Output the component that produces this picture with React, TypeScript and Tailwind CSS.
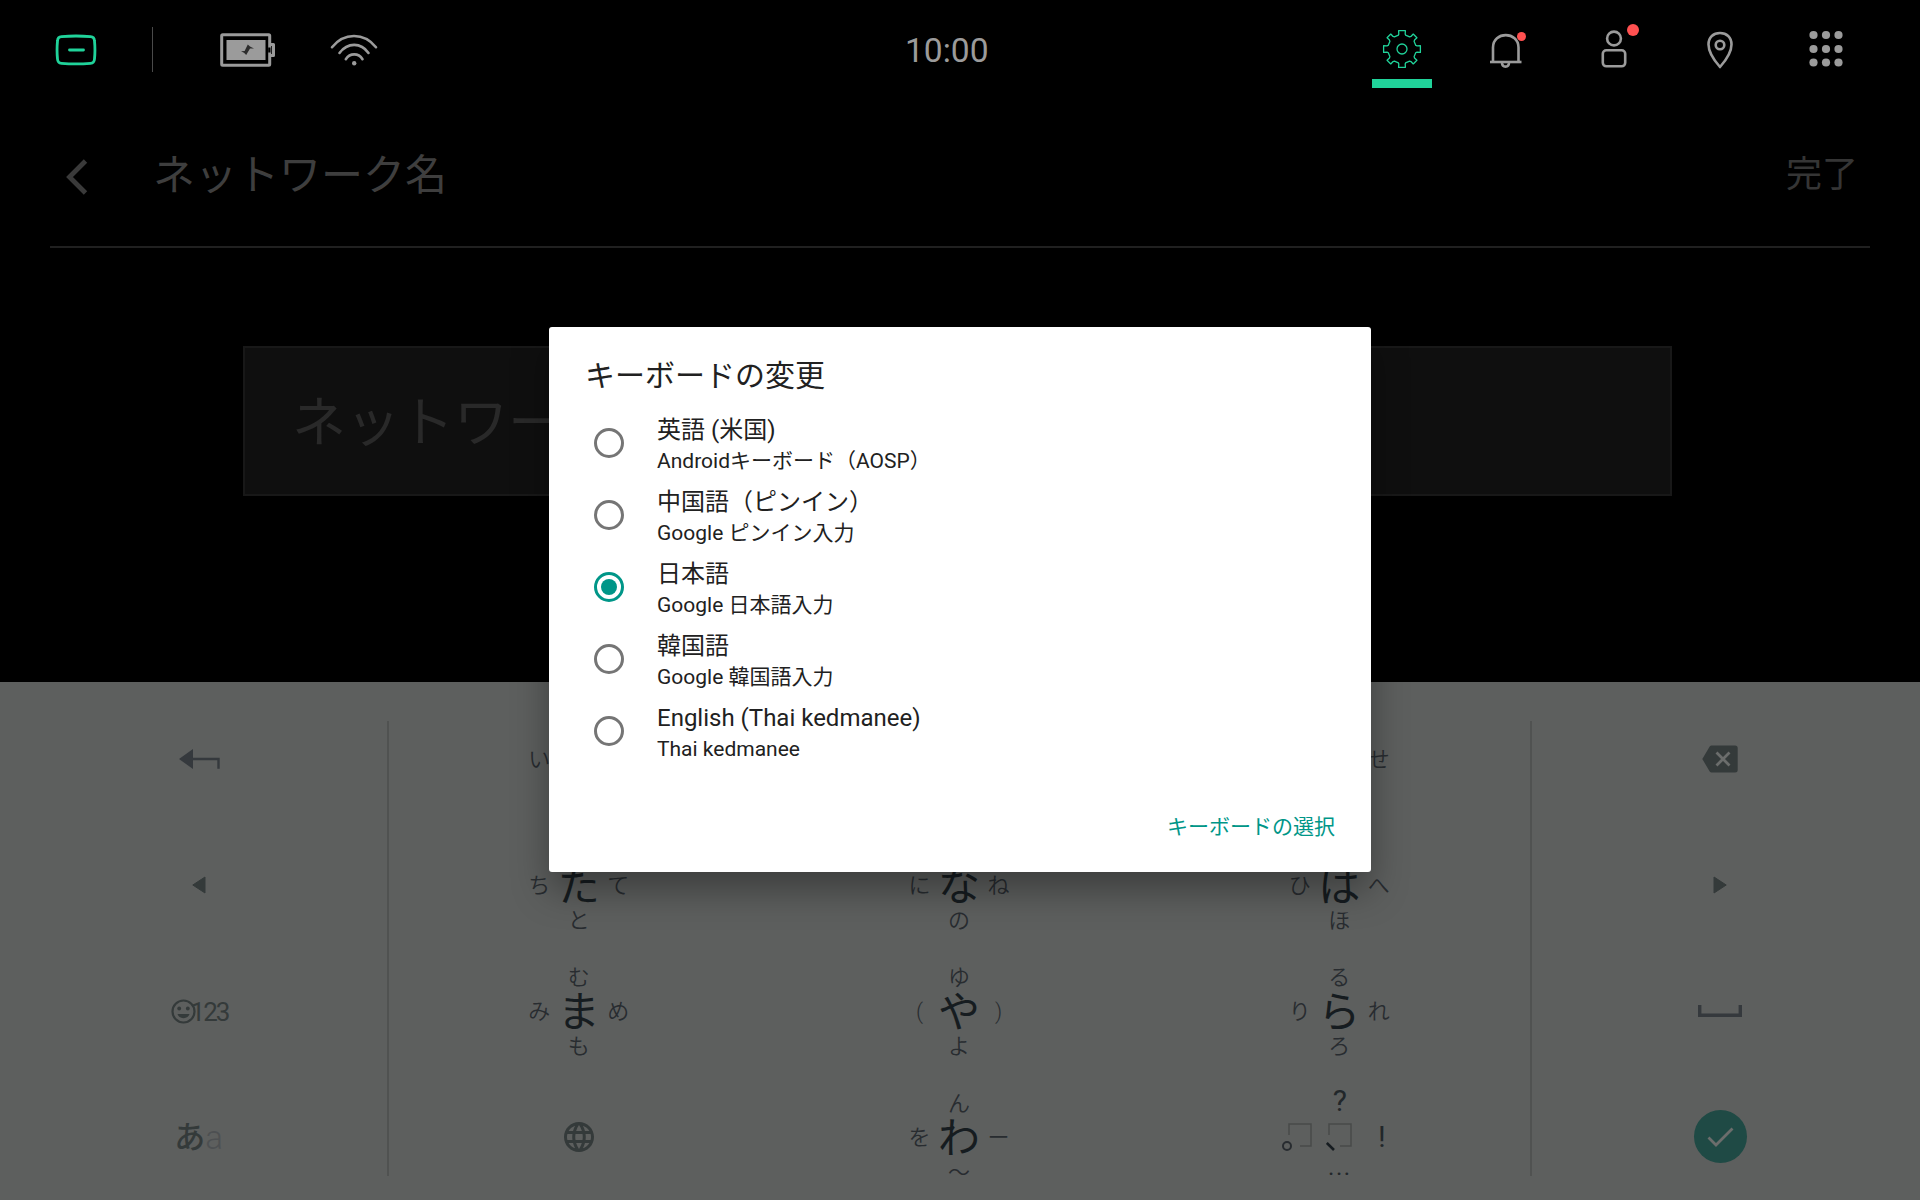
import React from "react";

type IconProps = { className?: string };

const HubIcon = () => (
  <svg width="42" height="32" viewBox="0 0 42 32" fill="none" stroke="#20d39a" strokeWidth="2.8" strokeLinecap="round">
    <path d="M6.5 2.7Q21 1.3 35.5 2.7Q39.3 3 39.5 7Q40.4 16 39.5 25Q39.3 29 35.5 29.3Q21 30.6 6.5 29.3Q2.7 29 2.5 25Q1.6 16 2.5 7Q2.7 3 6.5 2.7Z" />
    <path d="M14.5 16H28.5" />
  </svg>
);

const BatteryIcon = () => (
  <svg width="56" height="34" viewBox="0 0 56 34" fill="none">
    <rect x="1.7" y="1.7" width="48" height="30.6" rx="1" stroke="#9b9b9b" strokeWidth="3" />
    <rect x="6.5" y="7" width="39" height="20" fill="#9b9b9b" />
    <path d="M50 11.5H53.5V22.5H50" stroke="#9b9b9b" strokeWidth="3" strokeLinejoin="round" />
    <path d="M48.2 14.5H50.5V19.5H48.2Z" fill="#000" />
    <path d="M27.8 11.5L30 13.6L34 15.5L30 15.6L26.2 22L24 19.8L21 18.2L24.6 18Z" fill="#2c2c2c" />
  </svg>
);

const WifiIcon = () => (
  <svg width="48" height="34" viewBox="0 0 48 34" fill="none" stroke="#9b9b9b" strokeWidth="2.6" strokeLinecap="round">
    <path d="M2 14.2C14 -0.8 34 -0.8 46 14.2" />
    <path d="M9.5 20C17.5 9.2 31 9.2 38.5 20" />
    <path d="M15.8 26.2C20 19.8 28.5 19.8 32.5 26.2" />
    <circle cx="24.2" cy="30.3" r="2.2" fill="#9b9b9b" stroke="none" />
  </svg>
);

const GearIcon = () => {
  const teeth = [0, 45, 90, 135, 180, 225, 270, 315];
  const point = (radius: number, angle: number) => {
    const rad = (angle * Math.PI) / 180;
    return `${(20 + radius * Math.sin(rad)).toFixed(2)} ${(20 - radius * Math.cos(rad)).toFixed(2)}`;
  };
  const d = teeth
    .map((a, i) => {
      const axis = i % 2 === 0;
      const w = axis ? 10.5 : 8;
      const foot = axis ? 4 : 5;
      return `${i === 0 ? "M" : "L"}${point(14.3, a - w - foot)}L${point(15.4, a - w - 1.5)}L${point(18.7, a - w)}L${point(18.7, a + w)}L${point(15.4, a + w + 1.5)}L${point(14.3, a + w + foot)}`;
    })
    .join("");
  return (
    <svg width="40" height="40" viewBox="0 0 40 40" fill="none" stroke="#20d39a" strokeWidth="1.3" strokeLinejoin="round">
      <path d={d + "Z"} />
      <circle cx="20" cy="20" r="5" />
    </svg>
  );
};

const BellIcon = () => (
  <svg width="34" height="36" viewBox="0 0 34 36" fill="none" stroke="#9b9b9b" strokeWidth="2.6">
    <path d="M4 29V14.5C4 -2 29.5 -2 29.5 14.5V29" />
    <path d="M1 29H32.5" />
    <path d="M13 29.5C13 35 20 35 20 29.5" />
  </svg>
);

const PersonIcon = () => (
  <svg width="26" height="40" viewBox="0 0 26 40" fill="none" stroke="#9b9b9b" strokeWidth="2.6">
    <circle cx="13" cy="9.5" r="6.9" />
    <rect x="1.8" y="21.3" width="22.4" height="16" rx="3.5" />
  </svg>
);

const PinIcon = () => (
  <svg width="28" height="38" viewBox="0 0 28 38" fill="none" stroke="#9b9b9b" strokeWidth="2.6">
    <path d="M14 36C10 31.5 2.5 22 2.5 13.5C2.5 6 7.5 2 14 2S25.5 6 25.5 13.5C25.5 22 18 31.5 14 36Z" strokeLinejoin="round" />
    <circle cx="14" cy="14" r="4.3" />
  </svg>
);

const AppsIcon = () => (
  <svg width="34" height="38" viewBox="0 0 34 38" fill="#9b9b9b">
    {[5, 19, 32.5].map((y) => [4.5, 17, 29.5].map((x) => <circle key={`${x}-${y}`} cx={x} cy={y} r="4.1" />))}
  </svg>
);

const StatusBar = () => (
  <header className="flex h-[98px] shrink-0">
    <div className="flex w-[380px] items-center pl-[55px]">
      <div className="mt-[2px]"><HubIcon /></div>
      <div className="ml-[55px] h-[45px] w-px bg-[#4a4a4a]" />
      <div className="ml-[67px] mt-[2px]"><BatteryIcon /></div>
      <div className="ml-[54px] mt-[2px]"><WifiIcon /></div>
    </div>
    <div className="flex flex-1 items-center pl-[525px] pt-[3px] text-[33.6px] leading-none text-[#9b9b9b]">10:00</div>
    <div className="flex h-full w-[560px] items-center pl-3">
      <div className="flex w-[60px] flex-col items-center pt-[19px]">
        <GearIcon />
        <div className="mt-[10px] h-[9px] w-[60px] bg-[#20d39a]" />
      </div>
      <div className="relative ml-[57px] mt-[4px]">
        <BellIcon />
        <span className="absolute left-[28px] top-[-1px] size-[9px] rounded-full bg-[#ff5050]" />
      </div>
      <div className="relative ml-[78px]">
        <PersonIcon />
        <span className="absolute left-[26px] top-[-5px] size-3 rounded-full bg-[#ff5050]" />
      </div>
      <div className="ml-[79px] mt-px"><PinIcon /></div>
      <div className="ml-[75px]"><AppsIcon /></div>
    </div>
  </header>
);

type KanaKey = { main: string; left?: string; top?: string; right?: string; bottom?: string };

const Kana = ({ main, left, top, right, bottom }: KanaKey) => (
  <div className="mr-px mt-[3px] grid grid-cols-[40px_39px_40px] grid-rows-[34px_36px_34px] place-items-center text-[22px] font-[350] leading-none text-[#282c30]">
    <span />
    <span>{top}</span>
    <span />
    <span className="mb-[2px]">{left}</span>
    <span className="whitespace-nowrap text-[42px] font-normal leading-none text-[#161c20]">{main}</span>
    <span className="mb-[2px]">{right}</span>
    <span />
    <span className="mb-[2px]">{bottom}</span>
    <span />
  </div>
);

const EnterIcon = () => (
  <svg className="ml-[2px]" width="42" height="22" viewBox="0 0 42 22" fill="none">
    <path d="M0 11L14 1V21Z" fill="#35393d" />
    <path d="M13 11H39.5V20.8" stroke="#35393d" strokeWidth="2.4" />
  </svg>
);

const Triangle = ({ className }: IconProps) => (
  <svg className={className} width="14" height="18" viewBox="0 0 14 18">
    <path d="M0.8 9L13 1V17Z" fill="#343a3a" stroke="#343a3a" strokeLinejoin="round" />
  </svg>
);

const EmojiIcon = () => (
  <svg width="25" height="25" viewBox="0 0 25 25" fill="none">
    <circle cx="12.5" cy="12.5" r="11" stroke="#343a3a" strokeWidth="2.2" />
    <circle cx="8.2" cy="9.5" r="1.9" fill="#343a3a" />
    <circle cx="16.8" cy="9.5" r="1.9" fill="#343a3a" />
    <path d="M6.5 15H18.5C17 20.5 8 20.5 6.5 15Z" fill="#343a3a" />
  </svg>
);

const BackspaceIcon = () => (
  <svg width="36" height="28" viewBox="0 0 36 28" fill="none">
    <path d="M9.5 0.5H33Q35.7 0.5 35.7 3V25Q35.7 27.5 33 27.5H9.5Q8.5 27.5 7.7 26.5L0.3 14L7.7 1.5Q8.5 0.5 9.5 0.5Z" fill="#343a3a" />
    <path d="M14.5 7.5L27.5 20.5M27.5 7.5L14.5 20.5" stroke="#6b6d6c" strokeWidth="2.8" />
  </svg>
);

const SpaceIcon = () => (
  <svg width="44" height="12" viewBox="0 0 44 12" fill="none">
    <path d="M1.7 0V10.2H42.3V0" stroke="#35393d" strokeWidth="3.4" />
  </svg>
);

const GlobeIcon = () => (
  <svg width="30" height="30" viewBox="2 2 20 20" fill="#343a3a">
    <path d="M11.99 2C6.47 2 2 6.48 2 12s4.47 10 9.99 10C17.52 22 22 17.52 22 12S17.52 2 11.99 2zm6.93 6h-2.95c-.32-1.25-.78-2.45-1.38-3.56 1.84.63 3.37 1.91 4.33 3.56zM12 4.04c.83 1.2 1.48 2.53 1.91 3.96h-3.82c.43-1.43 1.08-2.76 1.91-3.96zM4.26 14C4.1 13.36 4 12.69 4 12s.1-1.36.26-2h3.38c-.08.66-.14 1.32-.14 2 0 .68.06 1.34.14 2H4.26zm.82 2h2.95c.32 1.25.78 2.45 1.38 3.56-1.84-.63-3.37-1.9-4.33-3.56zm2.95-8H5.08c.96-1.66 2.49-2.93 4.33-3.56C8.81 5.55 8.35 6.75 8.03 8zM12 19.96c-.83-1.2-1.48-2.53-1.91-3.96h3.82c-.43 1.43-1.08 2.76-1.91 3.96zM14.34 14H9.66c-.09-.66-.16-1.32-.16-2 0-.68.07-1.35.16-2h4.68c.09.65.16 1.32.16 2 0 .68-.07 1.34-.16 2zm.25 5.56c.6-1.11 1.06-2.31 1.38-3.56h2.95c-.96 1.65-2.49 2.93-4.33 3.56zM16.36 14c.08-.66.14-1.32.14-2 0-.68-.06-1.34-.14-2h3.38c.16.64.26 1.31.26 2s-.1 1.36-.26 2h-3.38z" />
  </svg>
);

const MissingGlyph = ({ className }: IconProps) => (
  <svg className={className} width="24" height="24" viewBox="0 0 24 24" fill="none" stroke="#484b4a" strokeWidth="1.5">
    <path d="M1 12V1H23V23H12" />
  </svg>
);

const PunctuationKey = () => (
  <div className="grid grid-cols-[40px_39px_40px] grid-rows-[34px_36px_34px] place-items-center leading-none text-[#22272a]">
    <span />
    <span className="mt-[-3px] text-[30px]">?</span>
    <span />
    <div className="relative mt-[-5px]">
      <MissingGlyph />
      <span className="absolute left-[-6px] top-[18px] size-[10px] rounded-full border-2 border-[#282c30]" />
    </div>
    <div className="relative mt-[-5px]">
      <MissingGlyph />
      <svg className="absolute left-[-2px] top-[19px]" width="9" height="9" viewBox="0 0 9 9">
        <path d="M0.8 1L8 8" stroke="#161c20" strokeWidth="2.6" />
      </svg>
    </div>
    <span className="pl-[5px] text-[30px]">!</span>
    <span />
    <span className="mt-[-10px] text-[24px] tracking-[1.5px]">...</span>
    <span />
  </div>
);

const CheckIcon = () => (
  <div className="mt-[-1px] flex size-[53px] items-center justify-center rounded-full bg-[#1f4a45]">
    <svg width="27" height="20" viewBox="0 0 27 20" fill="none">
      <path d="M1.5 10.5L9 18L25.5 1.5" stroke="#6b6d6c" strokeWidth="2.8" />
    </svg>
  </div>
);

const kanaRows: KanaKey[][] = [
  [
    { main: "あ", left: "い", top: "う", right: "え", bottom: "お" },
    { main: "か", left: "き", top: "く", right: "け", bottom: "こ" },
    { main: "さ", left: "し", top: "す", right: "せ", bottom: "そ" },
  ],
  [
    { main: "た", left: "ち", top: "つ", right: "て", bottom: "と" },
    { main: "な", left: "に", top: "ぬ", right: "ね", bottom: "の" },
    { main: "は", left: "ひ", top: "ふ", right: "へ", bottom: "ほ" },
  ],
  [
    { main: "ま", left: "み", top: "む", right: "め", bottom: "も" },
    { main: "や", left: "(", top: "ゆ", right: ")", bottom: "よ" },
    { main: "ら", left: "り", top: "る", right: "れ", bottom: "ろ" },
  ],
];

const Cell = ({ children }: { children: React.ReactNode }) => (
  <div className="flex h-[126px] items-center justify-center">{children}</div>
);

const Keyboard = () => (
  <section className="flex h-[518px] shrink-0 overflow-hidden bg-[#5d5f5e] px-[10px] pt-[14px]">
    <div className="w-[377px]">
      <Cell><EnterIcon /></Cell>
      <Cell><Triangle /></Cell>
      <Cell>
        <EmojiIcon />
        <span className="ml-[-5px] mr-[-2px] mt-[2px] text-[26px] leading-none tracking-[-2px] text-[#343a3a]">123</span>
      </Cell>
      <Cell>
        <span className="text-[31px] font-medium leading-none text-[#343a3a]">あ</span>
        <span className="text-[33px] font-light leading-none text-[#4d5052]">a</span>
      </Cell>
    </div>
    <div className="mt-[25px] h-[455px] w-[2px] bg-[#505251]" />
    <div className="grid w-[1141px] grid-cols-3 content-start">
      {kanaRows.flat().map((key) => (
        <Cell key={key.main}><Kana {...key} /></Cell>
      ))}
      <Cell><GlobeIcon /></Cell>
      <Cell><Kana main="わ" left="を" top="ん" right="ー" bottom="〜" /></Cell>
      <Cell><PunctuationKey /></Cell>
    </div>
    <div className="mt-[25px] h-[455px] w-[2px] bg-[#505251]" />
    <div className="w-[376px]">
      <Cell><BackspaceIcon /></Cell>
      <Cell><Triangle className="rotate-180" /></Cell>
      <Cell><SpaceIcon /></Cell>
      <Cell><CheckIcon /></Cell>
    </div>
  </section>
);

const options = [
  { name: "英語 (米国)", detail: "Androidキーボード（AOSP）" },
  { name: "中国語（ピンイン）", detail: "Google ピンイン入力" },
  { name: "日本語", detail: "Google 日本語入力", selected: true },
  { name: "韓国語", detail: "Google 韓国語入力" },
  { name: "English (Thai kedmanee)", detail: "Thai kedmanee" },
];

const KeyboardDialog = () => (
  <div className="absolute left-[549px] top-[327px] flex h-[545px] w-[822px] flex-col rounded-[3px] bg-white text-[#212121] shadow-[0_18px_36px_rgba(0,0,0,0.35)]">
    <h2 className="pl-9 pt-[31px] text-[30px] leading-9">キーボードの変更</h2>
    <ul className="mt-[13px]">
      {options.map((o) => (
        <li key={o.name} className="flex h-[72px] items-center pl-[45px]">
          {o.selected ? (
            <span className="flex size-[30px] items-center justify-center rounded-full border-3 border-[#009688]">
              <span className="size-4 rounded-full bg-[#009688]" />
            </span>
          ) : (
            <span className="size-[30px] rounded-full border-3 border-[#757575]" />
          )}
          <span className="ml-[33px] flex flex-col pt-[4px]">
            <span className="text-[24px] leading-8">{o.name}</span>
            <span className="text-[21px] leading-[30px]">{o.detail}</span>
          </span>
        </li>
      ))}
    </ul>
    <button className="mr-9 mt-[45px] self-end text-[21px] leading-[30px] text-[#009688]">キーボードの選択</button>
  </div>
);

export default function App() {
  return (
    <div className="relative flex h-[1200px] w-[1920px] flex-col overflow-hidden bg-black font-['Roboto','Noto_Sans_CJK_JP',sans-serif]">
      <StatusBar />
      <div className="mx-[50px] flex h-[150px] shrink-0 items-center border-b-2 border-[#202020] pt-[8px]">
        <svg className="ml-4 mt-[2px]" width="22" height="36" viewBox="0 0 22 36" fill="none" stroke="#3a3a3a" strokeWidth="4.8">
          <path d="M19.5 2L3.5 18L19.5 34" />
        </svg>
        <h1 className="ml-[65px] flex-1 text-[42px] leading-none text-[#3e3e3e]">ネットワーク名</h1>
        <span className="mr-[12px] mt-[-2px] text-[36px] leading-none text-[#353535]">完了</span>
      </div>
      <main className="flex-1 px-[243px] pt-[98px]">
        <div className="flex h-[150px] w-[1429px] items-center border-2 border-[#181818] bg-[#0f0f0f] pl-[47px] pt-[6px] text-[54px] leading-none text-[#292929]">
          ネットワーク名
        </div>
      </main>
      <Keyboard />
      <KeyboardDialog />
    </div>
  );
}
